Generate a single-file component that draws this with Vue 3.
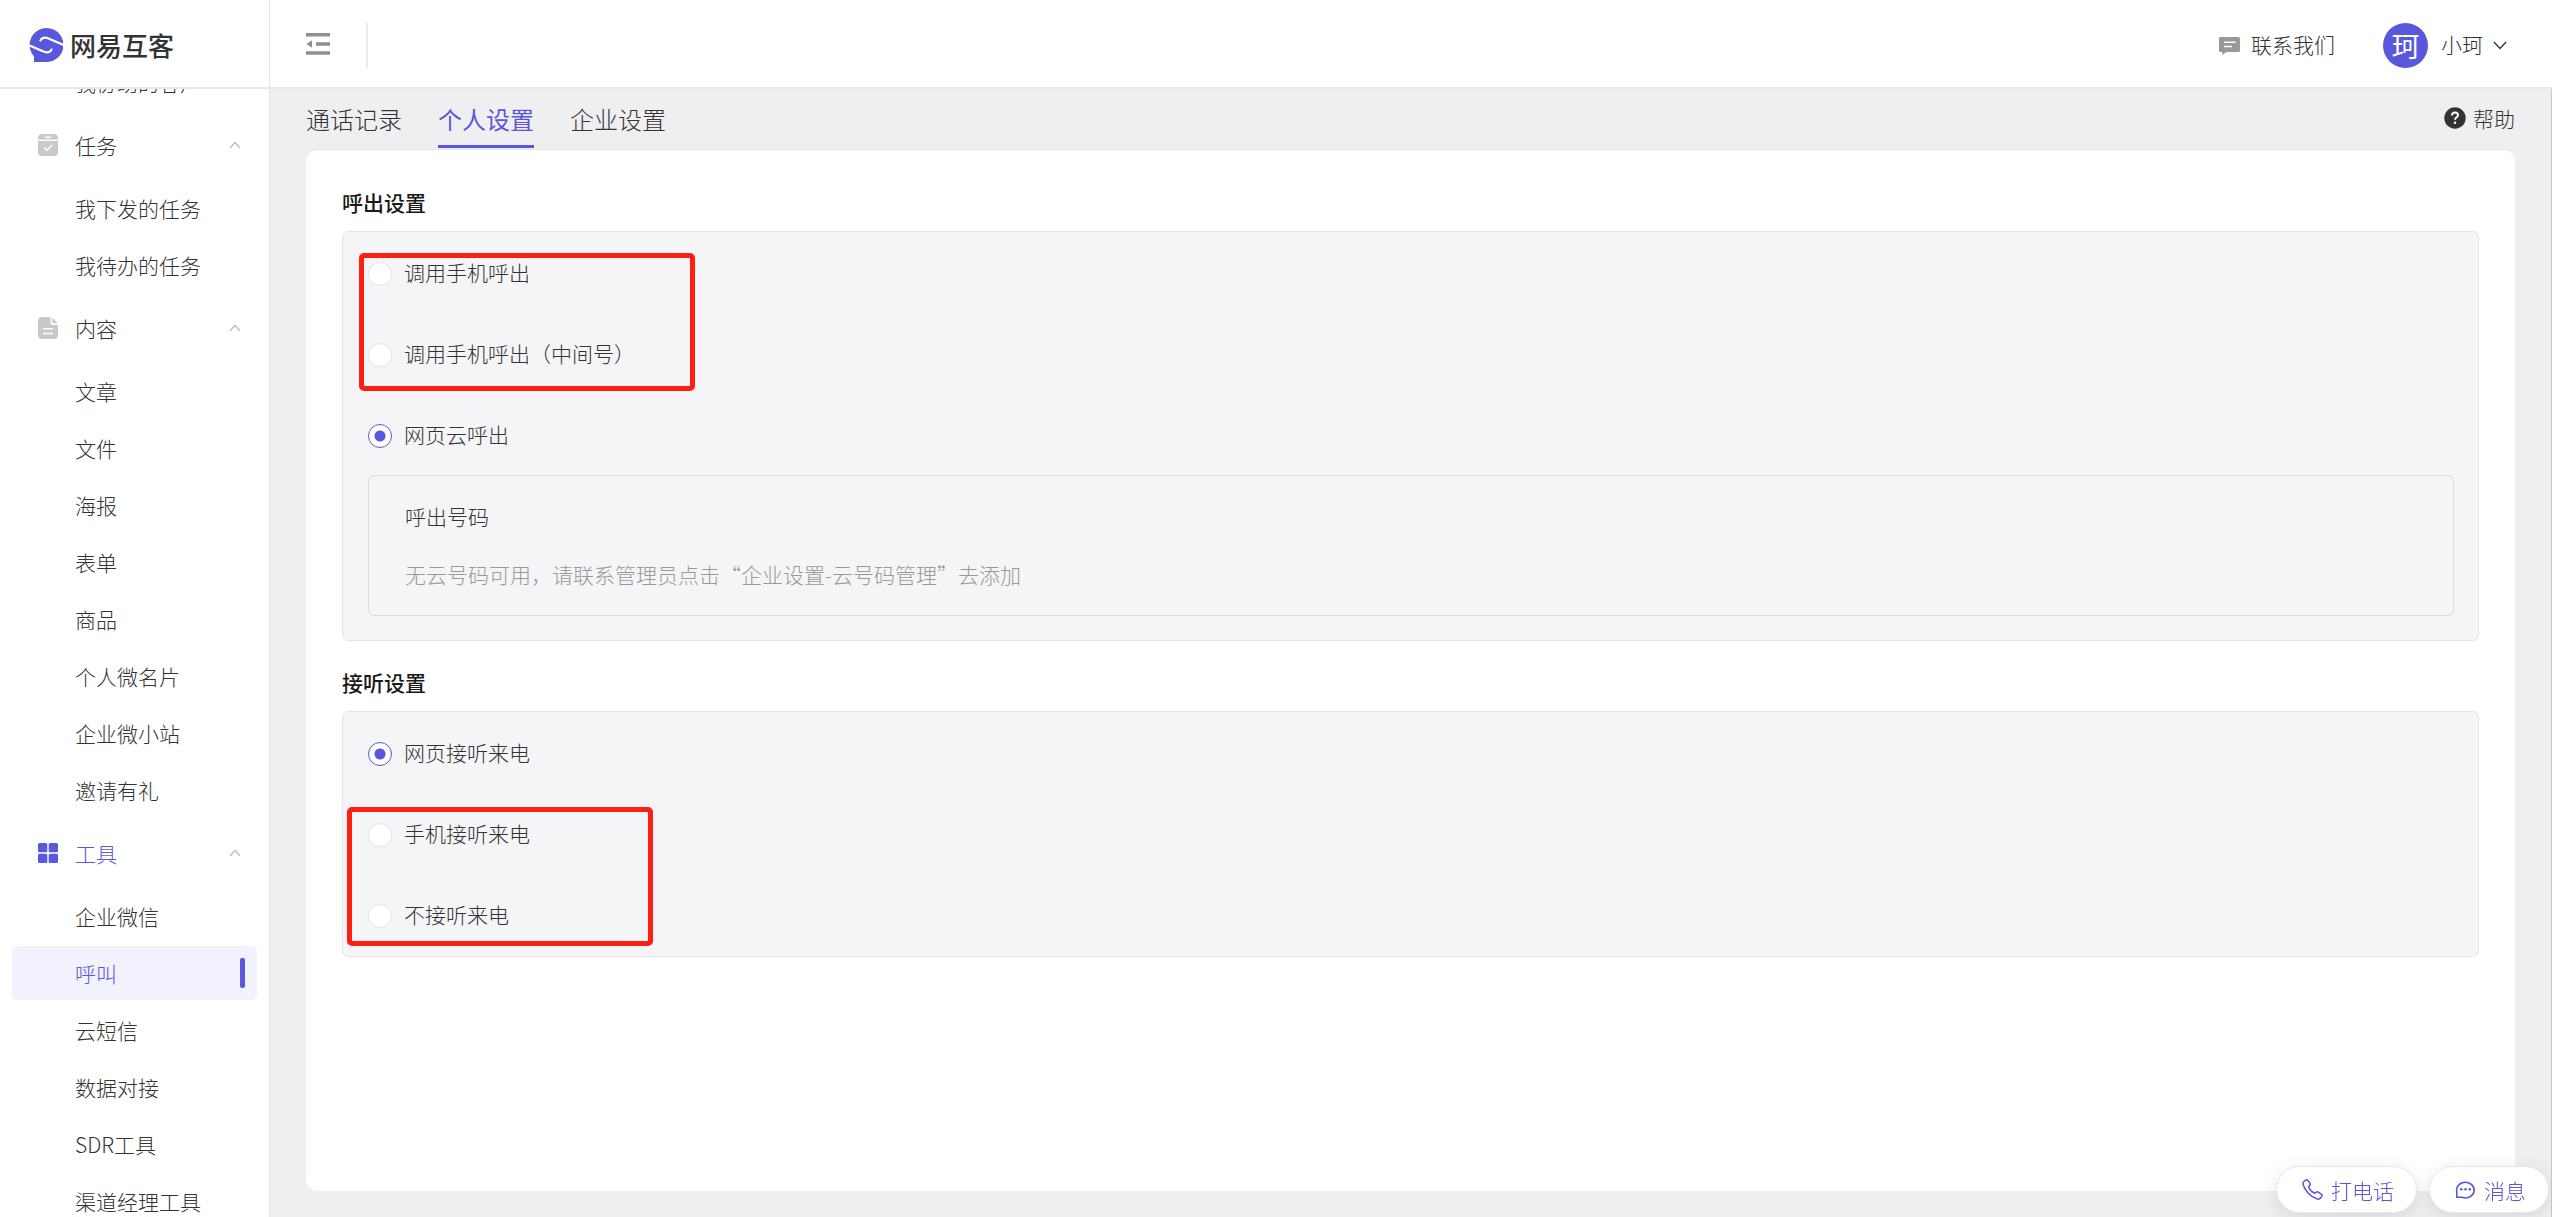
<template>
    <div class="layout">
        <aside class="sidebar">
            <a class="logo" href="#">
                <svg class="logoIcon" viewBox="0 0 34 34">
                    <path d="M5 34V28.500A17 17 0 1 1 17 34Z" fill="#5957dc" />
                    <path d="M0 17.200L14.500 23.600C18 25 21.700 24.300 22.500 21.500M34 16.800L19.500 10.400C16 9 12.300 9.700 11.500 12.500" fill="none" stroke="#fff" stroke-width="2.200" stroke-linecap="round" />
                </svg>
                <span>网易互客</span>
            </a>
            <nav ref="menu" class="menu">
                <div v-for="group in groups" :key="group.title" class="group">
                    <button v-if="group.title" type="button" class="groupTitle" :class="{ current: group.icon === 'tools' }">
                        <svg v-if="group.icon === 'task'" class="groupIcon" viewBox="0 0 20 22">
                            <path d="M4 0H16A4 4 0 0 1 20 4V5.500H0V4A4 4 0 0 1 4 0ZM0 7H20V18A4 4 0 0 1 16 22H4A4 4 0 0 1 0 18Z" fill="#c9c9cb" />
                            <path d="M7 3.200H13M6 13.500L9 16.300L14 11" fill="none" stroke="#fff" stroke-width="1.500" />
                        </svg>
                        <svg v-else-if="group.icon === 'content'" class="groupIcon" viewBox="0 0 20 22">
                            <path d="M4 0H12.500V5A3 3 0 0 0 15.500 8H20V18A4 4 0 0 1 16 22H4A4 4 0 0 1 0 18V4A4 4 0 0 1 4 0ZM14.200 0.500L19.800 6.300H16A1.800 1.800 0 0 1 14.200 4.500Z" fill="#c9c9cb" />
                            <path d="M5 11.800H15M5 16.500H15" stroke="#fff" stroke-width="1.500" />
                        </svg>
                        <svg v-else class="groupIcon" viewBox="0 0 20 22">
                            <g fill="#5957dc">
                                <rect x="0" y="1" width="9.300" height="9.300" rx="1.500" />
                                <rect x="10.700" y="1" width="9.300" height="9.300" rx="1.500" />
                                <rect x="0" y="11.700" width="9.300" height="9.300" rx="1.500" />
                                <rect x="10.700" y="11.700" width="9.300" height="9.300" rx="1.500" />
                            </g>
                        </svg>
                        <span>{{ group.title }}</span>
                        <svg class="arrow" viewBox="0 0 12 8">
                            <path d="M1 7L6 1.500L11 7" fill="none" stroke="#bbb" stroke-width="1.200" />
                        </svg>
                    </button>
                    <a v-for="item in group.items" :key="item" href="#" class="menuItem" :class="{ active: item === '呼叫' }">{{ item }}</a>
                </div>
            </nav>
        </aside>

        <div class="right">
            <header class="header">
                <button type="button" class="collapse" aria-label="收起菜单">
                    <svg width="24" height="22" viewBox="0 0 24 22">
                        <path d="M0 0H24V3.500H0ZM10 9.200H24V12.700H10ZM0 18.300H24V21.800H0ZM0.500 11L6 7.200V14.800Z" fill="#8f8f8f" />
                    </svg>
                </button>
                <span class="divider"></span>
                <a href="#" class="contact">
                    <svg width="21" height="18" viewBox="0 0 21 18">
                        <path d="M1.500 0H19.500A1.500 1.500 0 0 1 21 1.500V13.500A1.500 1.500 0 0 1 19.500 15H7.500L3.300 18V15H1.500A1.500 1.500 0 0 1 0 13.500V1.500A1.500 1.500 0 0 1 1.500 0Z" fill="#999" />
                        <path d="M5 5.200H16.500M5 9.500H13" stroke="#fff" stroke-width="1.500" />
                    </svg>
                    <span class="text">联系我们</span>
                </a>
                <button type="button" class="user">
                    <span class="avatar">珂</span>
                    <span class="text">小珂</span>
                    <svg width="14" height="9" viewBox="0 0 14 9">
                        <path d="M1 1L7 7.500L13 1" fill="none" stroke="#333" stroke-width="1.400" />
                    </svg>
                </button>
            </header>

            <main class="content">
                <div class="tabBar">
                    <a v-for="tab in tabs" :key="tab" href="#" class="tab" :class="{ selected: tab === currentTab }">{{ tab }}</a>
                    <a href="#" class="help">
                        <svg width="22" height="22" viewBox="0 0 22 22">
                            <circle cx="11" cy="11" r="10.700" fill="#333" />
                            <path d="M8 8.500C8 6.500 9.300 5.500 11 5.500S14 6.600 14 8.200C14 10.300 11 10.300 11 12.800" fill="none" stroke="#fff" stroke-width="1.900" />
                            <circle cx="11" cy="15.800" r="1.200" fill="#fff" />
                        </svg>
                        <span>帮助</span>
                    </a>
                </div>

                <div class="panel">
                    <h2>呼出设置</h2>
                    <div class="options">
                        <label v-for="option in callOptions" :key="option" class="option">
                            <input v-model="callType" type="radio" name="callType" :value="option">
                            <span class="text">{{ option }}</span>
                        </label>
                        <div class="numberBox">
                            <p class="text">呼出号码</p>
                            <p class="text hint">无云号码可用，请联系管理员点击“企业设置-云号码管理”去添加</p>
                        </div>
                        <div class="mark markCall"></div>
                    </div>

                    <h2>接听设置</h2>
                    <div class="options">
                        <label v-for="option in answerOptions" :key="option" class="option">
                            <input v-model="answerType" type="radio" name="answerType" :value="option">
                            <span class="text">{{ option }}</span>
                        </label>
                        <div class="mark markAnswer"></div>
                    </div>
                </div>
            </main>
        </div>

        <div class="floatButtons">
            <button type="button">
                <svg width="21" height="21" viewBox="0 0 21 21">
                    <path d="M2 2.500L4 0.900C4.600 0.500 5.300 0.600 5.800 1.200L8 4.400C8.400 5 8.300 5.700 7.800 6.200L6.600 7.500C7.300 10.300 10 13 12.800 14.200L14.400 13.100C15 12.700 15.600 12.700 16.200 13.100L19.500 15.300C20.200 15.800 20.300 16.500 19.900 17.100L18.500 19C17.700 20.100 16.500 20.300 15.300 20C8.500 17.800 2.800 11.700 1 5.300C0.700 4.200 1.100 3.200 2 2.500Z" fill="none" stroke="#5957dc" stroke-width="1.500" />
                </svg>
                <span>打电话</span>
            </button>
            <button type="button">
                <svg width="21" height="21" viewBox="0 0 21 21">
                    <path d="M1.800 18.300V12.800A8.800 7.800 0 1 1 7 18.300Z" fill="none" stroke="#5957dc" stroke-width="1.600" stroke-linejoin="round" />
                    <g fill="#5957dc">
                        <circle cx="6.200" cy="10.300" r="1.300" />
                        <circle cx="10.500" cy="10.300" r="1.300" />
                        <circle cx="14.800" cy="10.300" r="1.300" />
                    </g>
                </svg>
                <span>消息</span>
            </button>
        </div>
    </div>
</template>

<script setup>
import { ref, onMounted } from 'vue';

const menu = ref(null)

const groups = [
    { title: '', items: ['我协助的客户'] },
    { title: '任务', icon: 'task', items: ['我下发的任务', '我待办的任务'] },
    { title: '内容', icon: 'content', items: ['文章', '文件', '海报', '表单', '商品', '个人微名片', '企业微小站', '邀请有礼'] },
    { title: '工具', icon: 'tools', items: ['企业微信', '呼叫', '云短信', '数据对接', 'SDR工具', '渠道经理工具'] },
]

const tabs = ['通话记录', '个人设置', '企业设置']
const currentTab = ref('个人设置')

const callOptions = ['调用手机呼出', '调用手机呼出（中间号）', '网页云呼出']
const callType = ref('网页云呼出')

const answerOptions = ['网页接听来电', '手机接听来电', '不接听来电']
const answerType = ref('网页接听来电')

onMounted(() => {
    menu.value.scrollTop = 34
})
</script>

<style>
body {
    margin: 0;
    background: #efeff1;
}
</style>

<style scoped>
* {
    box-sizing: border-box;
}

.layout {
    display: flex;
    height: 100vh;
    font-family: "Noto Sans CJK SC", "Liberation Sans", sans-serif;
    font-size: 21px;
    font-weight: 300;
    line-height: 36px;
    color: #333;
}

a {
    color: inherit;
    text-decoration: none;
}

button {
    padding: 0;
    border: 0;
    background: none;
    font: inherit;
    color: inherit;
    cursor: pointer;
}

svg {
    flex: none;
}

.text {
    padding-bottom: 3px;
    line-height: 33px;
}

.sidebar {
    display: flex;
    flex-direction: column;
    flex: none;
    width: 270px;
    background: #fff;
    border-right: 1px solid #e5e5e7;
}

.logo {
    display: flex;
    align-items: center;
    flex: none;
    gap: 7px;
    height: 89px;
    padding: 2px 0 0 29px;
    border-bottom: 2px solid #e8e8ea;
    font-size: 26px;
    font-weight: 500;
}

.logoIcon {
    width: 34px;
    height: 34px;
}

.menu {
    flex: 1;
    min-height: 0;
    padding: 0 12px 24px;
    overflow-y: auto;
    scrollbar-width: none;
}

.groupTitle {
    display: flex;
    align-items: center;
    width: 100%;
    height: 66px;
    margin-bottom: 3px;
    padding: 0 16px 0 26px;
}

.groupTitle.current {
    color: #5957dc;
}

.groupIcon {
    width: 20px;
    height: 22px;
    margin-right: 17px;
}

.arrow {
    width: 12px;
    height: 8px;
    margin-left: auto;
}

.menuItem {
    display: flex;
    align-items: center;
    height: 54px;
    margin-bottom: 3px;
    padding: 0 12px 0 63px;
    border-radius: 6px;
}

.menuItem.active {
    background: #f2f1fe;
    color: #5957dc;
}

.menuItem.active::after {
    content: "";
    width: 5px;
    height: 30px;
    margin-left: auto;
    border-radius: 2px;
    background: #5957dc;
}

.right {
    display: flex;
    flex-direction: column;
    flex: 1;
    min-width: 0;
}

.header {
    display: flex;
    align-items: center;
    flex: none;
    height: 89px;
    padding: 4px 45px 0 36px;
    background: #fff;
    border-bottom: 2px solid #e8e8ea;
}

.collapse {
    display: flex;
    padding-bottom: 3px;
}

.divider {
    width: 2px;
    height: 45px;
    margin-left: 36px;
    background: #e8e8ee;
}

.contact {
    display: flex;
    align-items: center;
    gap: 11px;
    margin-left: auto;
}

.user {
    display: flex;
    align-items: center;
    margin-left: 48px;
}

.user svg {
    margin-left: 10px;
}

.avatar {
    width: 45px;
    height: 45px;
    margin-right: 13px;
    border-radius: 50%;
    background: #5957dc;
    color: #fff;
    font-size: 28px;
    font-weight: 400;
    line-height: 45px;
    text-align: center;
}

.content {
    display: flex;
    flex-direction: column;
    flex: 1;
    min-height: 0;
    padding: 0 36px 26px;
    background: #efeff1;
    border-right: 1px solid #c8c8ca;
}

.tabBar {
    display: flex;
    gap: 36px;
    height: 61px;
    padding-bottom: 1px;
    border-bottom: 1px solid #e6e6e8;
}

.tab {
    padding-top: 12px;
    border-bottom: 3px solid transparent;
    font-size: 24px;
}

.tab.selected {
    border-color: #5957dc;
    color: #5957dc;
    font-weight: 400;
}

.help {
    display: flex;
    align-items: center;
    gap: 7px;
    margin-left: auto;
    padding-bottom: 2px;
}

.panel {
    flex: 1;
    padding: 36px;
    border-radius: 12px;
    background: #fff;
}

h2 {
    margin: 0 0 12px;
    font-size: 21px;
    font-weight: 500;
    line-height: 33px;
    color: #1a1a1a;
}

.options {
    position: relative;
    display: flex;
    flex-direction: column;
    gap: 45px;
    padding: 24px 24px 22px 25px;
    border: 1px solid #e6e6ea;
    border-radius: 6px;
    background: #f5f5f8;
}

.options + h2 {
    margin-top: 25px;
}

.option {
    display: flex;
    align-items: center;
    align-self: flex-start;
    gap: 12px;
}

.option input {
    appearance: none;
    width: 24px;
    height: 24px;
    margin: 0;
    border: 1px solid #e3e3e8;
    border-radius: 50%;
    background: #fff;
}

.option input:checked {
    border-color: #5957dc;
    background: radial-gradient(circle, #5957dc 5px, #fff 6px);
}

.numberBox {
    display: flex;
    flex-direction: column;
    gap: 22px;
    margin: -24px 0 2px;
    padding: 24px 36px 21px;
    border: 1px solid #d9d9de;
    border-radius: 6px;
}

.numberBox p {
    margin: 0;
}

.numberBox .hint {
    color: #999;
}

/* Красные рамки вокруг вариантов */
.mark {
    position: absolute;
    border: 5px solid #ff1f10;
    border-radius: 5px;
    pointer-events: none;
}

.markCall {
    top: 21px;
    left: 16px;
    width: 336px;
    height: 138px;
}

.markAnswer {
    top: 95px;
    left: 4px;
    width: 306px;
    height: 139px;
}

.floatButtons {
    position: fixed;
    right: 3px;
    bottom: 4px;
    display: flex;
    gap: 12px;
}

.floatButtons button {
    display: flex;
    align-items: center;
    gap: 8px;
    height: 47px;
    padding: 0 22px 0 25px;
    border: 1px solid #e6e6ea;
    border-radius: 24px;
    background: #fff;
    box-shadow: 0 4px 18px rgba(0, 0, 0, 0.1);
    color: #5957dc;
}
</style>
